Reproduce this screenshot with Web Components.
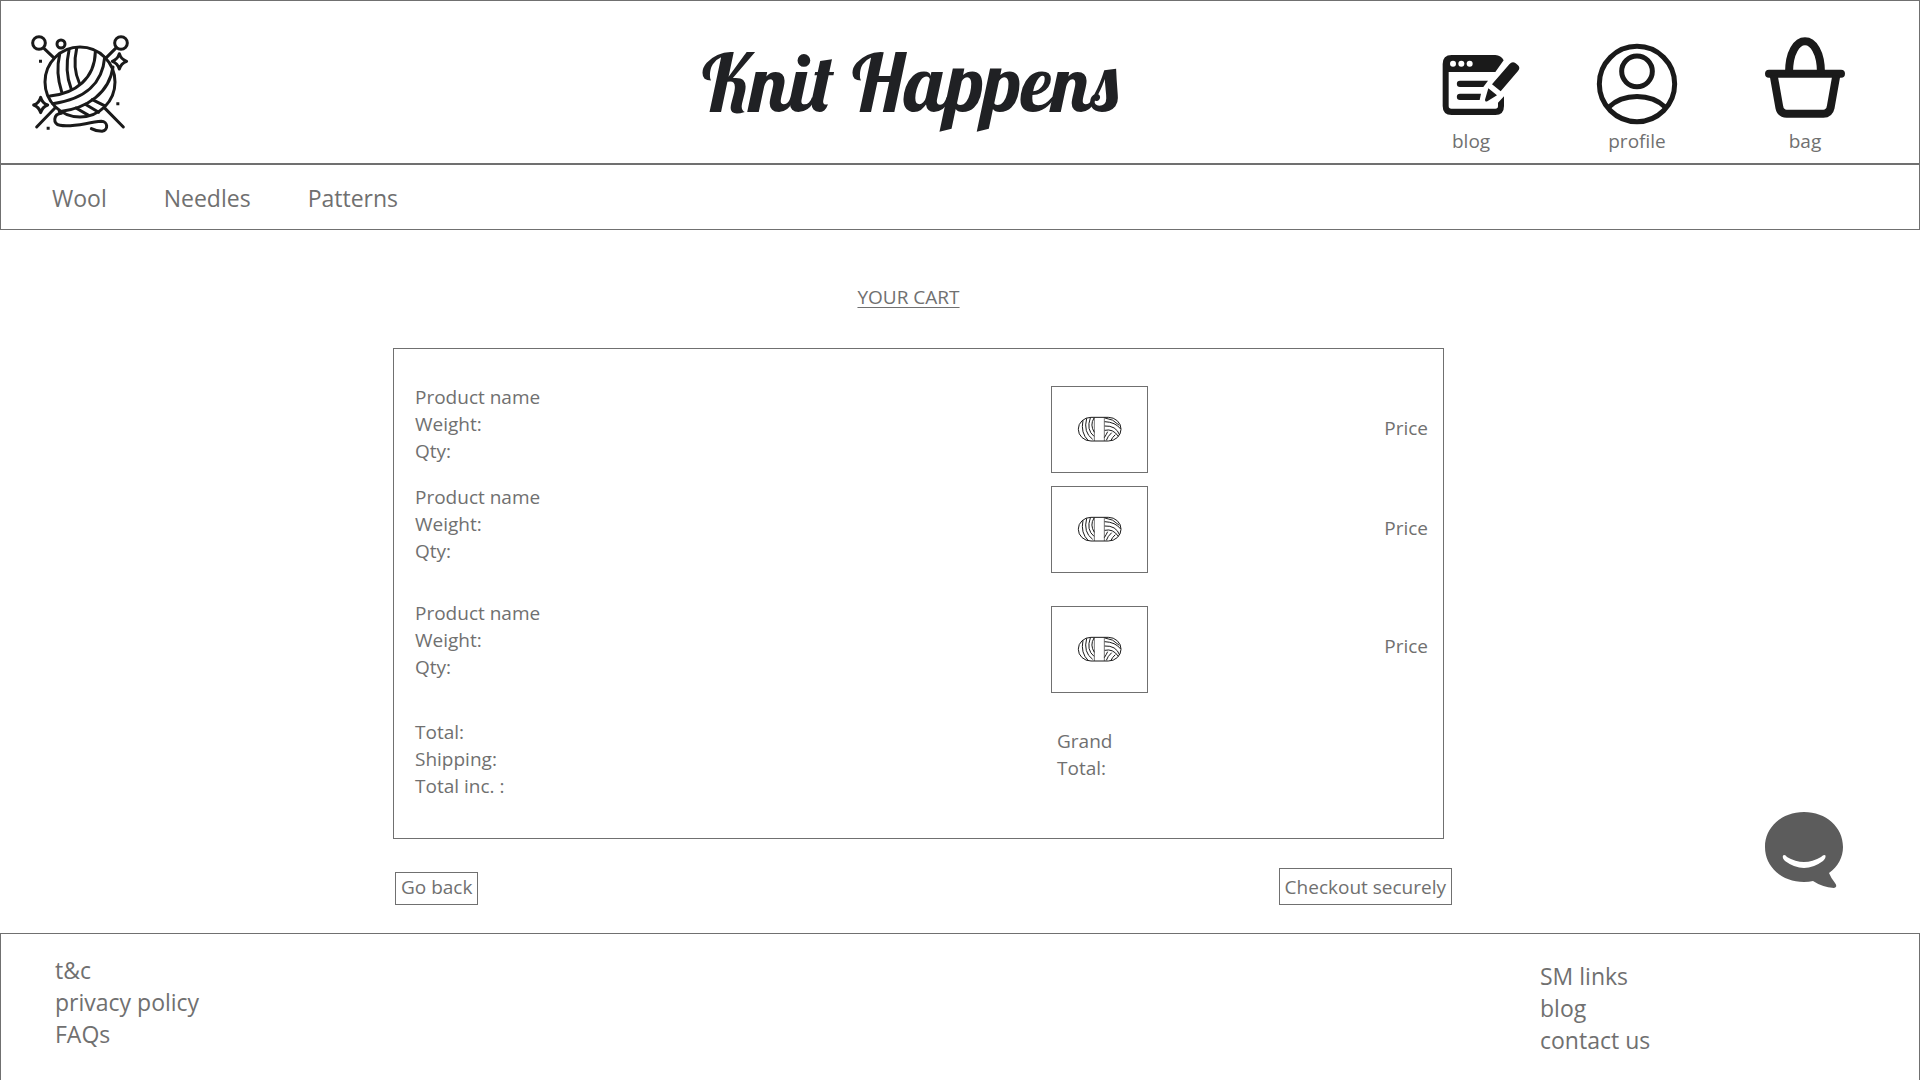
<!DOCTYPE html>
<html lang="en">
<head>
<meta charset="utf-8">
<meta name="viewport" content="width=device-width, initial-scale=1">
<title>Knit Happens – Your cart</title>
<style>
  html, body { margin: 0; background: #fff; }
  body {
    --line: #707070;
    --ink: #1a1a1a;
    font: 19px/27px "Segoe UI", "Open Sans", "Noto Sans", sans-serif;
    color: #707070;
  }
</style>
</head>
<body>
<kh-page></kh-page>

<script>
const define = (name, html) => {
  const template = document.createElement('template');
  template.innerHTML = html;
  customElements.define(name, class extends HTMLElement {
    constructor() {
      super();
      this.attachShadow({ mode: 'open' }).append(template.content.cloneNode(true));
    }
  });
};

define('kh-logo', `
  <style>
    :host { display: block; }
    a, svg { display: block; }
    svg { width: 120px; height: 115px; fill: none; stroke: var(--ink); stroke-width: 9; stroke-linecap: round; stroke-linejoin: round; }
    .dot { fill: var(--ink); stroke: none; }
  </style>
  <a href="#" aria-label="Home">
    <svg viewBox="0 0 360 345" aria-hidden="true">
      <circle cx="180" cy="171" r="105"/>
      <circle cx="57" cy="54" r="19"/><circle cx="303" cy="54" r="19"/><circle cx="123" cy="57" r="12"/>
      <path d="M72 70l29 28M289 68l-30 30M105 249l-55 57M255 250l55 56"/>
      <path d="M119 88q-13 54 6 112M147 76q-14 60 6 114M170 70q-13 58 8 104"/>
      <path d="M226 81C224 160 168 205 90 213M254 97C248 170 200 222 98 236M279 126C268 202 204 250 118 260"/>
      <path d="M217 224l36 18M196 238l40 24M168 249l38 22"/>
      <path d="M124 265c-24 2-27 32-4 36 38 7 78-8 124-12 20 0 22 27 2 30q-18 0-32-8"/>
      <path d="M298 86q5 17 22 23-17 6-22 23-5-17-21-23 16-6 21-23zM62 217q5 18 21 23-16 6-21 23-5-17-21-23 16-5 21-23z"/>
      <path class="dot" d="M57 104h9v9h-9zM289 232h9v9h-9zM80 305h9v9h-9z"/>
    </svg>
  </a>`);

define('kh-shortcut', `
  <style>
    :host { display: block; }
    a { display: flex; flex-direction: column; align-items: center; gap: 4px; color: inherit; text-decoration: none; }
    :host([label-start]) .label { align-self: flex-start; padding-left: 11px; }
  </style>
  <a href="#"><slot name="icon"></slot><span class="label"><slot></slot></span></a>`);

define('kh-header', `
  <style>
    :host { display: grid; grid-template-columns: 692fr 436fr 792fr; height: 164px; box-sizing: border-box; border: 1px solid var(--line); }
    kh-logo { padding: 24px 0 0 19px; }
    h1 { margin: 0; align-self: center; justify-self: center; white-space: nowrap; color: #202124;
         font: 400 80px/100px Lobster, "Liberation Serif", serif; }
    nav { display: flex; justify-content: flex-end; align-items: flex-end; padding: 0 74px 8px 0; }
    kh-shortcut + kh-shortcut { margin-left: 76px; }
    kh-shortcut + kh-shortcut + kh-shortcut { margin-left: 88px; }
    svg { display: block; width: 80px; height: 80px; overflow: visible; fill: none; stroke: var(--ink); }
    .bag { height: 86px; }
    .solid { fill: var(--ink); stroke: none; }
    .gap { fill: #fff; stroke: none; }
  </style>
  <kh-logo></kh-logo>
  <h1>Knit Happens</h1>
  <nav aria-label="Shortcuts">
    <kh-shortcut label-start>
      <svg slot="icon" viewBox="63 57 240 240" aria-hidden="true">
        <path class="solid" d="M95 90H226Q243 91 251 106L226 141H86V243Q86 251 94 251H226Q234 251 234 243V233L252 214V243Q252 270 226 270H95Q68 270 68 243V117Q68 90 95 90Z"/>
        <circle class="gap" cx="99" cy="116" r="9"/><circle class="gap" cx="124" cy="116" r="9"/><circle class="gap" cx="149" cy="116" r="9"/>
        <path class="solid" d="M120 167H204L190 186H120a9.500 9.500 0 0 1 0-19zM120 206H183L179 225H120a9.500 9.500 0 0 1 0-19z"/>
        <path class="solid" d="M216 178L268 118Q277 107 287 115L294 121Q302 129 294 138L242 199ZM205 190L231 211L202 229Q195 232 195 224Z"/>
      </svg>
      blog
    </kh-shortcut>
    <kh-shortcut>
      <svg slot="icon" viewBox="531 57 240 240" stroke-width="15" aria-hidden="true">
        <circle cx="651" cy="177" r="113"/><circle cx="651" cy="139" r="46"/>
        <path d="M566 247C610 204 692 204 736 247"/>
      </svg>
      profile
    </kh-shortcut>
    <kh-shortcut>
      <svg slot="icon" class="bag" viewBox="315 40 240 258" stroke-width="24" aria-hidden="true">
        <path d="M327 147H543" stroke-linecap="round"/>
        <path d="M387 145C387 18 483 18 483 145M341 152L358 248Q362 267 380 267H490Q508 267 512 248L529 152"/>
      </svg>
      bag
    </kh-shortcut>
  </nav>`);

define('kh-nav', `
  <style>
    :host { display: block; border: 1px solid var(--line); }
    nav { display: flex; gap: 57px; padding: 17px 51px 15px; font-size: 23px; line-height: 32px; }
    a { color: inherit; text-decoration: none; }
  </style>
  <nav aria-label="Categories"><a href="#">Wool</a><a href="#">Needles</a><a href="#">Patterns</a></nav>`);

define('kh-yarn', `
  <style>
    :host { display: grid; place-items: center; box-sizing: border-box; width: 97px; height: 87px; padding-bottom: 2px; border: 1px solid var(--line); }
    svg { display: block; width: 45px; height: 26px; fill: none; stroke: var(--ink); stroke-width: 3; }
    .band { opacity: .6; }
  </style>
  <svg viewBox="50 47 135 78" role="img" aria-label="Ball of yarn">
    <rect x="54" y="51" width="128" height="71" rx="38" ry="35"/>
    <path d="M68 60Q60 98 84 121M79 54Q68 96 97 117M90 53Q77 88 101 108M101 53Q88 74 102 96"/>
    <path class="band" d="M102 51V122M132 51V122"/>
    <path d="M134 53Q158 55 177 75M133 64Q165 65 181 86M133 77Q167 75 178 104M133 90Q158 84 174 108M132 112Q137 104 142 94M138 120Q142 108 154 97M152 120Q156 111 165 103"/>
  </svg>`);

define('kh-cart-row', `
  <style>
    :host { display: grid; grid-template-columns: 636fr 97px 280fr; min-height: 89px; }
    :host([tall]) { min-height: 93px; }
    .media { align-self: end; }
    .price { align-self: center; justify-self: end; }
  </style>
  <div><slot></slot></div>
  <div class="media"><kh-yarn></kh-yarn></div>
  <div class="price"><slot name="price"></slot></div>`);

define('kh-cart', `
  <style>
    :host { display: grid; grid-template-columns: 393fr 1051fr 476fr; }
    h2 { grid-column: 2; margin: 0; padding: 54px 20px 37px 0; font: inherit; text-align: center; text-decoration: underline; text-underline-offset: 3px; text-decoration-thickness: 1px; }
    section { grid-column: 2; display: flex; flex-direction: column; border: 1px solid var(--line); padding: 35px 15px 38px 21px; }
    kh-cart-row + kh-cart-row { margin-top: 11px; }
    kh-cart-row + kh-cart-row[tall] { margin-top: 27px; }
    .totals { display: grid; grid-template-columns: 636fr 97px 280fr; margin-top: 26px; }
    .grand { padding: 9px 0 0 6px; }
  </style>
  <h2>YOUR CART</h2>
  <section>
    <kh-cart-row>Product name<br>Weight:<br>Qty:<span slot="price">Price</span></kh-cart-row>
    <kh-cart-row>Product name<br>Weight:<br>Qty:<span slot="price">Price</span></kh-cart-row>
    <kh-cart-row tall>Product name<br>Weight:<br>Qty:<span slot="price">Price</span></kh-cart-row>
    <div class="totals">
      <div>Total:<br>Shipping:<br>Total inc. :</div>
      <div class="grand">Grand<br>Total:</div>
    </div>
  </section>`);

define('kh-actions', `
  <style>
    :host { display: grid; grid-template-columns: 395fr 1057fr 468fr; padding: 29px 0 28px; }
    div { grid-column: 2; display: flex; justify-content: space-between; align-items: flex-end; }
    button { margin: 0; background: #fff; border: 1px solid var(--line); border-radius: 0; color: inherit; font: inherit; padding: 1px 5px 3px; cursor: pointer; }
    .primary { padding-top: 5px; }
  </style>
  <div><button type="button">Go back</button><button type="button" class="primary">Checkout securely</button></div>`);

define('kh-chat', `
  <style>
    :host { position: fixed; right: 77px; bottom: 192px; display: block; }
    button { display: block; padding: 0; border: 0; background: none; cursor: pointer; }
    svg { display: block; width: 78px; height: 76px; fill: #5c5c5c; }
  </style>
  <button type="button" aria-label="Open chat">
    <svg viewBox="0 0 78 76" aria-hidden="true">
      <path d="M39 0C61 0 78 15 78 35C78 45 73 55 64 61Q66 66 70 71Q73 75 69 76Q57 75 48 69Q44 70 39 70C17 70 0 55 0 35S17 0 39 0Z"/>
      <path fill="#fff" d="M18 43.500Q20 42 22 45Q39 55 56 45Q59 42 60.500 43.500Q61 46 58 49Q39 63 20 49Q17 46 18 43.500Z"/>
    </svg>
  </button>`);

define('kh-footer', `
  <style>
    :host { display: grid; grid-template-columns: 1485fr 325fr; border: 1px solid var(--line); border-bottom: 0; padding: 20px 54px; font-size: 23px; line-height: 32px; }
    nav { display: flex; flex-direction: column; align-items: flex-start; }
    nav + nav { padding-top: 6px; }
    a { color: inherit; text-decoration: none; }
  </style>
  <nav aria-label="Legal"><a href="#">t&amp;c</a><a href="#">privacy policy</a><a href="#">FAQs</a></nav>
  <nav aria-label="Contact"><a href="#">SM links</a><a href="#">blog</a><a href="#">contact us</a></nav>`);

define('kh-page', `
  <style>
    :host { display: flex; flex-direction: column; min-height: 100vh; }
    kh-footer { flex: 1; }
  </style>
  <kh-header></kh-header>
  <kh-nav></kh-nav>
  <main><kh-cart></kh-cart><kh-actions></kh-actions></main>
  <kh-chat></kh-chat>
  <kh-footer></kh-footer>`);
</script>
</body>
</html>
